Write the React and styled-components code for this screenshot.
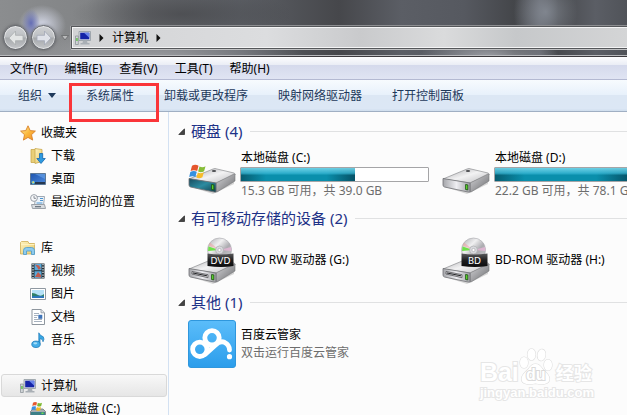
import React, { useState } from 'react';
import styled, { createGlobalStyle } from 'styled-components';


const menuItems = ['文件(F)', '编辑(E)', '查看(V)', '工具(T)', '帮助(H)'];

const navGroups = [
    {
        title: '收藏夹', icon: 'star',
        items: [
            { label: '下载', icon: 'download' },
            { label: '桌面', icon: 'desktop' },
            { label: '最近访问的位置', icon: 'recent' }
        ]
    },
    {
        title: '库', icon: 'library',
        items: [
            { label: '视频', icon: 'video' },
            { label: '图片', icon: 'picture' },
            { label: '文档', icon: 'doc' },
            { label: '音乐', icon: 'music' }
        ]
    },
    {
        title: '计算机', icon: 'computer',
        items: [
            { label: '本地磁盘 (C:)', icon: 'disk' }
        ]
    }
];


const smallIcons = {
    star: (
        <path d="M8 .8l2.2 4.8 5.2.5-3.9 3.6 1.2 5.4L8 12.4l-4.6 2.7 1.1-5.4L.6 6.1l5.2-.5z" fill="url(#gStar)" stroke="#d9812a" strokeWidth=".9" />
    ),
    download: (
        <>
            <path d="M1 1.5h6v13H1z" fill="#e9cf78" stroke="#c9a84c" strokeWidth=".8" />
            <path d="M5 .5l7 1v12l-7 2z" fill="url(#gFolder)" stroke="#c9a84c" strokeWidth=".8" />
            <path d="M9.5 5.5h3.2v5h2.6L11 15.5 6.8 10.5h2.7z" fill="#2e9ae0" stroke="#1668b0" strokeWidth=".8" />
        </>
    ),
    desktop: (
        <>
            <path d="M.5 2.5h15v11H.5z" fill="url(#gScreen)" stroke="#5c7896" />
            <path d="M1 11h14v2H1z" fill="#26384f" />
            <path d="M5 3L15 8V3z" fill="#6ba5ea" opacity=".6" />
            <circle cx="3.2" cy="11.5" r="1.8" fill="#58b7dc" />
            <path d="M2.5 10.5h1.5v1.5H2.5z" fill="#f4d25a" />
        </>
    ),
    recent: (
        <>
            <path d="M5.5 2.5h9l-1 9h-9z" fill="#eef4fa" stroke="#9fa8b2" />
            <path d="M10 4.5h3M10 6.5h3M6.5 9h6" stroke="#4b93cf" strokeWidth="1.2" />
            <path d="M1.5 10.5h13l1 4h-13z" fill="#d8dce0" stroke="#9ba1a8" />
            <path d="M5 12h6v1.3H5z" fill="#6f7984" />
            <circle cx="4" cy="4" r="3.4" fill="#f7f8fa" stroke="#9aa1a9" />
            <path d="M4 2v2.3h2" stroke="#6c747d" fill="none" strokeWidth=".8" />
        </>
    ),
    library: (
        <>
            <path d="M.5 2.5V14h14V3.5H9l-1-2H1.5z" fill="url(#gFolder)" stroke="#cfaf55" strokeWidth=".8" />
            <path d="M1 4.5h13.5" stroke="#fff3c0" />
            <path d="M3.5 14.5v-4q0-3 3-3h5q3 0 3 3v4h-3V11h-5v3.5z" fill="#8dcbee" stroke="#4d9bcc" strokeWidth=".8" />
        </>
    ),
    video: (
        <>
            <path d="M1.5.5h13v15h-13z" fill="#243038" />
            <path d="M4.5 1h7v6.3h-7zM4.5 8.3h7V15h-7z" fill="#5babdb" />
            <path d="M5 1.5l4 1 2 3-2.5 1.3-1-2zM5 14l3-5 3 3v2.5z" fill="#c45b4d" />
            <path d="M3 1v14M13 1v14" stroke="#e2e9ec" strokeWidth="1.3" strokeDasharray="1.3 1.3" />
        </>
    ),
    picture: (
        <>
            <path d="M.5 2.5h15v11H.5z" fill="#fff" stroke="#8f98a1" />
            <path d="M2 4h12v8H2z" fill="#b5e1f7" />
            <path d="M2 7q3 0 6 2t6-1v4H2z" fill="#2f8068" />
            <path d="M2 10.3q6-1.3 12 0V12H2z" fill="#2c76bd" />
        </>
    ),
    doc: (
        <>
            <path d="M2 .5h9l3.5 3.3v11.7H2z" fill="#fff" stroke="#8e969e" />
            <path d="M11 .5v3.3h3.5" fill="#dfe4e9" stroke="#8e969e" strokeWidth=".8" />
            <path d="M4 4.5h5M4 6.5h4M4 8.5h3M4 10.5h8M4 12.5h8" stroke="#9da9b8" strokeWidth=".9" />
            <path d="M8.3 5.8h4v4h-4z" fill="#3f74b8" />
        </>
    ),
    music: (
        <>
            <path d="M8.8 12V.8Q10 3.8 13.3 4.8 14.8 7 13 9.8 13 7 10 6.5V12.5z" fill="#38a7e4" stroke="#1c79b8" strokeWidth=".7" />
            <ellipse cx="6" cy="12.3" rx="4.2" ry="3.2" fill="#45aee8" stroke="#1c79b8" strokeWidth=".8" />
            <ellipse cx="5.3" cy="11.3" rx="2" ry="1.1" fill="#a3dcf8" />
        </>
    ),
    computer: (
        <>
            <path d="M.5 6h2.8v8.5H.5z" fill="#d1d5d8" stroke="#858c92" strokeWidth=".7" />
            <path d="M1.3 8h1.3v3H1.3z" fill="#53bd3a" />
            <path d="M4 1.5h11.5v9H4z" fill="#d9dde1" stroke="#9199a1" strokeWidth=".8" />
            <path d="M5.2 2.7h9.1v6.6H5.2z" fill="#1524a8" />
            <path d="M9 2.7h5.3v5z" fill="#6a84ea" />
            <path d="M8 10.5h4l.5 2.5h2v1.5h-9V13h2z" fill="#a9afb5" />
        </>
    ),
    disk: (
        <>
            <path d="M.5 10.5L3 8h10l2.5 2.5v4H.5z" fill="#a7adb1" stroke="#6e757a" strokeWidth=".8" />
            <path d="M1 11h14v3H1z" fill="#3c8088" />
            <path d="M11.5 11.5h2V13h-2z" fill="#6de04f" />
            <path d="M3 1.7Q5 .5 7 1.5L6.3 4.6Q4.3 3.8 2.3 5z" fill="#e4582f" />
            <path d="M7.8 1.8q2 1 4.2 0l-.8 3.3q-2 1-4.1 0z" fill="#7db832" />
            <path d="M2 5.8q2-1.2 4.1-.2l-.8 3.2q-2-.8-4 .3z" fill="#3a8ee2" />
            <path d="M6.9 6q2 1 4.1 0l-.8 3.3q-2 1-4.1 0z" fill="#f5b920" />
        </>
    )
};


const SmallIcon = ({ name }) => (
    <svg width="16" height="16" viewBox="0 0 16 16" aria-hidden="true">{smallIcons[name]}</svg>
);


const GradientDefs = () => (
    <DefsSvg aria-hidden="true">
        <defs>
            <linearGradient id="gStar" x1="0" y1="0" x2="1" y2="1">
                <stop offset="0" stopColor="#fff3a6" />
                <stop offset=".5" stopColor="#fbb83d" />
                <stop offset="1" stopColor="#ef8a22" />
            </linearGradient>
            <linearGradient id="gFolder" x1="0" y1="0" x2="1" y2="1">
                <stop offset="0" stopColor="#fdf2bd" />
                <stop offset="1" stopColor="#e9ca6c" />
            </linearGradient>
            <linearGradient id="gScreen" x1="0" y1="0" x2="1" y2="1">
                <stop offset="0" stopColor="#1f55ae" />
                <stop offset="1" stopColor="#4c8ade" />
            </linearGradient>
            <linearGradient id="gTop" x1="0" y1="0" x2="1" y2="1">
                <stop offset="0" stopColor="#a9a9ac" />
                <stop offset=".5" stopColor="#f2f2f3" />
                <stop offset="1" stopColor="#bcbcbf" />
            </linearGradient>
            <linearGradient id="gFront" x1="0" y1="0" x2="1" y2="0">
                <stop offset="0" stopColor="#a5a6aa" />
                <stop offset=".5" stopColor="#eeeef2" />
                <stop offset="1" stopColor="#9e9fa3" />
            </linearGradient>
            <linearGradient id="gTeal" x1="0" y1="0" x2="1" y2="1">
                <stop offset="0" stopColor="#184a5c" />
                <stop offset=".5" stopColor="#2c8ba0" />
                <stop offset="1" stopColor="#123f4b" />
            </linearGradient>
            <linearGradient id="gSide" x1="0" y1="0" x2="1" y2="1">
                <stop offset="0" stopColor="#d5d5d8" />
                <stop offset="1" stopColor="#6b6c6f" />
            </linearGradient>
            <linearGradient id="gDisc" x1="0" y1="0" x2="1" y2="1">
                <stop offset="0" stopColor="#a9a9ad" />
                <stop offset=".35" stopColor="#f0f0f1" />
                <stop offset=".6" stopColor="#acacb0" />
                <stop offset="1" stopColor="#d3d3d7" />
            </linearGradient>
            <linearGradient id="gLabel" x1="0" y1="0" x2="0" y2="1">
                <stop offset="0" stopColor="#5a5a5c" />
                <stop offset=".5" stopColor="#1f1f20" />
                <stop offset="1" stopColor="#0c0c0d" />
            </linearGradient>
            <linearGradient id="gCloud" x1="0" y1="0" x2="0" y2="1">
                <stop offset="0" stopColor="#5bbdfa" />
                <stop offset="1" stopColor="#2b9deb" />
            </linearGradient>
        </defs>
    </DefsSvg>
);


const DriveBody = ({ slot, system }) => (
    <>
        <path d="M3 40l22 7 21-10v-3L25 44z" fill="#000" opacity=".15" />
        <path d="M1 32L25 22q2-1 4 0l17 4q2 1 1 2L28 36z" fill="url(#gTop)" stroke="#8d8e91" strokeWidth=".7" />
        <path d="M28 36l18-9q1 0 1 1v6L29 45q-1 .5-1-1z" fill="url(#gSide)" stroke="#77787b" strokeWidth=".6" />
        <path d="M1 31.5l27 4.5v8.5q0 1-1.5.6L2.5 40Q1 39.5 1 38z" fill={system ? 'url(#gTeal)' : 'url(#gFront)'} stroke="#6f7073" strokeWidth=".8" />
        {slot && <path d="M4 34.5l16 3.2v3L4 37z" fill="#d7d7da" stroke="#555659" strokeWidth=".8" />}
        {slot && <path d="M5 36l14 2.8" stroke="#26272a" strokeWidth="1" />}
        <path d="M23.6 37.5l2.2.4v5l-2.2-.4z" fill="#5fdc2c" stroke="#17470f" strokeWidth=".8" />
        {!slot && <ellipse cx="26" cy="24" rx="2.2" ry=".9" fill="#4c4d50" />}
    </>
);

const DriveIcon = ({ kind, label }) => (
    <svg width="48" height="48" viewBox={kind === 'optical' ? '0 -1 48 48' : '0 4 48 48'} aria-hidden="true">
        <DriveBody slot={kind === 'optical'} system={kind === 'system'} />
        {kind === 'system' && (
            <>
                <path d="M4 18.7Q7.5 17 10.5 18.8L9.2 24Q6 22.3 2.6 24z" fill="#e5562d" />
                <path d="M11.5 19.5q3 1.6 6-.2l-1.4 5q-3 1.8-6 .3z" fill="#86bd38" />
                <path d="M2.3 25q3.3-1.7 6.5-.2l-1.4 5.3q-3-1.6-6.2 0z" fill="#3590df" />
                <path d="M9.8 25.5q3 1.6 6-.2l-1.4 5q-3 1.8-6 .3z" fill="#f7bc29" />
            </>
        )}
        {kind === 'optical' && (
            <>
                <circle cx="31.5" cy="13" r="12" fill="url(#gDisc)" stroke="#b0b0b4" strokeWidth=".7" />
                <path d="M31.5 13l-11-3.5-.5 4.5z" fill="#6fe04a" />
                <path d="M31.5 13L22 5.6 20.6 8.8z" fill="#ef9c9c" opacity=".5" />
                <path d="M31.5 13l11.5-3 .5 4z" fill="#eeb7dc" opacity=".7" />
                <circle cx="31.5" cy="13" r="4" fill="#d9dade" stroke="#a6a7aa" strokeWidth=".6" />
                <circle cx="31.5" cy="13" r="1.6" fill="#fcfcfc" stroke="#96979a" strokeWidth=".5" />
                <path d="M19.5 16.5q12 2 26 0V29q-12 1.8-26 0z" fill="url(#gLabel)" />
                <text x="32.5" y="26.5" fontSize="9" fill="#fff" textAnchor="middle" fontFamily="DejaVu Sans, sans-serif">{label}</text>
            </>
        )}
    </svg>
);

const CloudIcon = () => (
    <svg width="48" height="48" viewBox="0 0 48 48" aria-hidden="true">
        <rect x=".5" y=".5" width="47" height="47" rx="2.5" fill="url(#gCloud)" stroke="#2f97dd" />
        <g fill="none" stroke="#fff" strokeWidth="4.8" strokeLinecap="round">
            <circle cx="11.8" cy="29.3" r="7.2" />
            <circle cx="24" cy="17.8" r="7.2" />
            <path d="M17.3 34.3L27.5 25Q32 20.5 36.5 22.3 41.5 24.8 41.5 30" />
        </g>
        <circle cx="41.5" cy="36.7" r="2.6" fill="#fff" />
    </svg>
);


const Drive = ({ name, kind, used, note }) => (
    <Tile>
        <DriveIcon kind={kind} />
        <TileText>
            <TileName>{name}</TileName>
            <Track role="progressbar" aria-label={name} aria-valuenow={used}>
                <Fill style={{ width: `${used}%` }} />
            </Track>
            <TileNote>{note}</TileNote>
        </TileText>
    </Tile>
);

const Group = ({ title, children }) => (
    <section>
        <GroupHead>
            <svg width="7" height="7" viewBox="0 0 7 7" aria-hidden="true"><path d="M6.5.8v5.7H.8z" fill="#444" stroke="#222" strokeWidth=".7" /></svg>
            <h2>{title}</h2>
            <hr />
        </GroupHead>
        <Tiles>{children}</Tiles>
    </section>
);

const Chevron = () => (
    <svg width="5" height="8" viewBox="0 0 5 8" aria-hidden="true"><path d="M.5 0L4.5 4l-4 4z" fill="#111" /></svg>
);


const App = () => {

    const [selected, setSelected] = useState('计算机');

    return (
        <Page>
            <GlobalStyle />
            <GradientDefs />
            <TitleBar>
                <RoundButton aria-label="后退">
                    <svg width="18" height="18" viewBox="0 0 18 18"><path d="M8.5 2L2 9l6.5 7v-4.3H16V6.3H8.5z" fill="#e3e5e5" stroke="#a9adaf" strokeWidth=".8" /></svg>
                </RoundButton>
                <RoundButton aria-label="前进">
                    <svg width="18" height="18" viewBox="0 0 18 18"><path d="M9.5 2L16 9l-6.5 7v-4.3H2V6.3h7.5z" fill="#dfe2e9" stroke="#a3a8b6" strokeWidth=".8" /></svg>
                </RoundButton>
                <HistoryButton aria-label="历史记录">
                    <svg width="8" height="6" viewBox="0 0 8 6"><path d="M.5.5h7L4 5z" fill="#b9babb" stroke="#66686a" strokeWidth=".8" /></svg>
                </HistoryButton>
                <AddressBar>
                    <SmallIcon name="computer" />
                    <Chevron />
                    <button>计算机</button>
                    <Chevron />
                </AddressBar>
            </TitleBar>

            <MenuBar>
                {menuItems.map(item => <button key={item}>{item}</button>)}
            </MenuBar>

            <Toolbar>
                <button>
                    组织
                    <svg width="8" height="5" viewBox="0 0 8 5" aria-hidden="true"><path d="M0 0h8L4 5z" fill="#1e395b" /></svg>
                </button>
                <Marked>系统属性</Marked>
                <button>卸载或更改程序</button>
                <button>映射网络驱动器</button>
                <button>打开控制面板</button>
            </Toolbar>

            <Body>
                <NavPane>
                    {navGroups.map(group => (
                        <NavGroup key={group.title}>
                            <NavRow $active={selected === group.title} onClick={() => setSelected(group.title)}>
                                <SmallIcon name={group.icon} />
                                {group.title}
                            </NavRow>
                            {group.items.map(item => (
                                <NavRow key={item.label} $nested $active={selected === item.label} onClick={() => setSelected(item.label)}>
                                    <SmallIcon name={item.icon} />
                                    {item.label}
                                </NavRow>
                            ))}
                        </NavGroup>
                    ))}
                </NavPane>

                <Content>
                    <Group title="硬盘 (4)">
                        <Drive name="本地磁盘 (C:)" kind="system" used={61} note="15.3 GB 可用，共 39.0 GB" />
                        <Drive name="本地磁盘 (D:)" kind="disk" used={72} note="22.2 GB 可用，共 78.1 GB" />
                    </Group>
                    <Group title="有可移动存储的设备 (2)">
                        <Tile>
                            <DriveIcon kind="optical" label="DVD" />
                            <TileText><TileName>DVD RW 驱动器 (G:)</TileName></TileText>
                        </Tile>
                        <Tile>
                            <DriveIcon kind="optical" label="BD" />
                            <TileText><TileName>BD-ROM 驱动器 (H:)</TileName></TileText>
                        </Tile>
                    </Group>
                    <Group title="其他 (1)">
                        <Tile>
                            <CloudIcon />
                            <TileText>
                                <TileName>百度云管家</TileName>
                                <TileNote>双击运行百度云管家</TileNote>
                            </TileText>
                        </Tile>
                    </Group>
                </Content>
            </Body>

            <Watermark>
                <Brand>
                    <span>Bai</span>
                    <Paw>
                        <svg width="34" height="37" viewBox="0 0 34 37" aria-hidden="true">
                            <g fill="#fff" stroke="#dedede" strokeWidth="1.2">
                                <ellipse cx="5" cy="14.5" rx="4" ry="5.5" />
                                <ellipse cx="12.5" cy="6.5" rx="4" ry="5.7" />
                                <ellipse cx="22.5" cy="7" rx="4" ry="5.7" transform="rotate(10 22.5 7)" />
                                <ellipse cx="29" cy="17" rx="4" ry="5.5" />
                                <path d="M16.5 16q4 0 7 5 7 6 7 10t-5 5q-4 .5-9-.5-5 1-9 .5-5-1-5-5t7-10q3-5 7-5z" />
                            </g>
                        </svg>
                        <b>du</b>
                    </Paw>
                    <span>经验</span>
                </Brand>
                <Site>jingyan.baidu.com</Site>
            </Watermark>
        </Page>
    );
};

export default App;



const GlobalStyle = createGlobalStyle`
    * {
        box-sizing: border-box;
    }

    body {
        margin: 0;
        background: #fcfcfc;
        color: #000;
        font: 12px/18px "Noto Sans", "Noto Sans CJK SC", sans-serif;
    }

    button {
        padding: 0;
        border: 0;
        background: none;
        color: inherit;
        font: inherit;
        white-space: nowrap;
    }

    svg {
        display: block;
        flex: none;
    }
`;

const DefsSvg = styled.svg`
    position: absolute;
    width: 0;
    height: 0;
`;

const Page = styled.div`
    position: relative;
    display: flex;
    flex-direction: column;
    height: 100vh;
    overflow: hidden;
`;

const TitleBar = styled.header`
    display: flex;
    flex: none;
    align-items: center;
    height: 57px;
    padding: 19px 0 0 3px;
    border-bottom: 1px solid #3c3a3e;
    box-shadow: inset 0 -1px 0 #b9babd;
    background:
        radial-gradient(9px 14px at 31px 23px, rgba(92, 102, 180, .9) 0, rgba(110, 120, 185, 0) 100%),
        radial-gradient(24px 20px at 42px 25px, rgba(222, 226, 242, .9) 0, rgba(200, 205, 220, 0) 100%),
        radial-gradient(32px 36px at 87% 12px, rgba(138, 144, 154, .8) 0, transparent 100%),
        radial-gradient(70px 22px at 78% 57px, rgba(176, 178, 184, .8) 0, transparent 100%),
        radial-gradient(150px 34px at 25% 60px, rgba(172, 173, 177, .8) 0, transparent 100%),
        radial-gradient(110px 26px at 29% 14px, rgba(58, 59, 62, .5) 0, transparent 100%),
        linear-gradient(90deg, #8b8d8f 0, #828486 14%, #66686c 24%, #5d6066 38%, #46474b 54%, #5b5e65 64%, #565960 74%, #44464a 82%, #5f6269 86%, #484a4e 89%, #5b5e65 95%, #505359 100%);
`;

const RoundButton = styled.button`
    &&& {
        display: flex;
        align-items: center;
        justify-content: center;
        width: 25px;
        height: 25px;
        margin-right: 3px;
        border: 1px solid #63666b;
        border-radius: 50%;
        background: linear-gradient(#cfd1d4 0, #bcbfc2 48%, #a5a8ab 52%, #c4c6c9 100%);
        box-shadow: inset 0 0 0 1px rgba(255, 255, 255, .5), 0 0 3px rgba(60, 60, 65, .6);
    }
`;

const HistoryButton = styled.button`
    &&& {
        display: flex;
        justify-content: center;
        width: 12px;
    }
`;

const AddressBar = styled.div`
    display: flex;
    flex: 1;
    align-items: center;
    gap: 8px;
    height: 23px;
    padding-left: 3px;
    border: 1px solid #55575a;
    border-right: 0;
    background: linear-gradient(90deg, #d2d3d5 0, #dcdddf 35%, #c9cacc 52%, #dadbdc 67%, #c6c8ca 80%, #d4d5d6 100%);
    box-shadow: inset 1px 1px 0 #f4f4f5, inset 0 -1px 0 #f4f4f5, -1px 0 0 #a2a3a5, 0 -1px 0 #8e8f92, 0 1px 0 #c0c1c3;
`;

const MenuBar = styled.nav`
    display: flex;
    flex: none;
    gap: 17px;
    align-items: center;
    height: 23px;
    padding: 2px 0 0 10px;
    border-bottom: 1px solid #b4b9d2;
    background: linear-gradient(#fdfdfe 0, #eaedf5 36%, #d5daec 38%, #e0e4f3 100%);
`;

const Toolbar = styled.div`
    display: flex;
    flex: none;
    gap: 30px;
    align-items: center;
    height: 32px;
    padding-left: 18px;
    border-bottom: 1px solid #a0afc3;
    background: linear-gradient(#f7fbfe 0, #e8f1fb 47%, #dce7f4 50%, #dce7f5 92%, #cfdeed 100%);
    color: #1e395b;

    button {
        display: flex;
        align-items: center;
        gap: 6px;
    }
`;

const Marked = styled.button`
    position: relative;

    &::after {
        content: '';
        position: absolute;
        inset: -4px -25px -17px -17px;
        border: 3px solid #fa3539;
        z-index: 2;
    }
`;

const Body = styled.div`
    display: flex;
    flex: 1;
    min-height: 0;
`;

const NavPane = styled.nav`
    display: flex;
    flex: none;
    flex-direction: column;
    gap: 23px;
    width: 169px;
    padding: 9px 1px 0;
    border-right: 1px solid #d3e1f2;
`;

const NavGroup = styled.div`
    display: flex;
    flex-direction: column;
`;

const NavRow = styled.button`
    &&& {
        display: flex;
        align-items: center;
        gap: 5px;
        height: 23px;
        padding-left: ${props => props.$nested ? '28px' : '18px'};
        border: 1px solid ${props => props.$active ? '#d9d9d9' : 'transparent'};
        border-radius: 3px;
        background: ${props => props.$active ? 'linear-gradient(#f8f8f8, #e6e6e6)' : 'none'};
        text-align: left;
    }
`;

const Content = styled.main`
    flex: 1;
    min-width: 0;
    padding: 8px 0 0 9px;
    overflow: hidden;
`;

const GroupHead = styled.div`
    display: flex;
    align-items: center;
    height: 22px;

    h2 {
        margin: 0 8px 0 6px;
        color: #1e3287;
        font-size: 15px;
        font-weight: 400;
        line-height: 22px;
        white-space: nowrap;
    }

    hr {
        flex: 1;
        margin: 0;
        border: 0;
        border-top: 1px solid #e0e1e2;
    }
`;

const Tiles = styled.div`
    display: flex;
    padding: 7px 0 7px 10px;
`;

const Tile = styled.div`
    display: flex;
    flex: none;
    gap: 4px;
    align-items: center;
    width: 254px;
`;

const TileText = styled.div`
    display: flex;
    flex-direction: column;
    width: 189px;
`;

const TileName = styled.div`
    padding-left: 1px;
    white-space: nowrap;
`;

const TileNote = styled.div`
    padding-left: 1px;
    color: #6d6d6d;
    white-space: nowrap;
`;

const Track = styled.div`
    height: 15px;
    border: 1px solid #a5a5a7;
    border-radius: 1px;
    background: #fff;
`;

const Fill = styled.div`
    height: 100%;
    background:
        linear-gradient(rgba(120, 215, 235, .9) 0, rgba(60, 185, 215, .75) 40%, rgba(60, 185, 215, 0) 56%),
        linear-gradient(90deg, #065c70 0, #0a8fac 22%, #0a8fac 75%, #065166 100%);
`;

const Watermark = styled.div`
    position: absolute;
    right: 33px;
    bottom: 14px;
    color: #fff;
    font-family: "Liberation Sans", "Noto Sans CJK SC", sans-serif;
    font-weight: 700;
    paint-order: stroke fill;
    -webkit-text-stroke: 2px #e6e6e6;
`;

const Brand = styled.div`
    display: flex;
    align-items: flex-end;

    span {
        font-size: 25px;
        line-height: 26px;
    }

    span:last-child {
        margin-left: 3px;
        font-size: 18px;
        line-height: 22px;
    }
`;

const Paw = styled.div`
    display: grid;

    > * {
        grid-area: 1 / 1;
    }

    b {
        align-self: end;
        justify-self: center;
        font-size: 16px;
        line-height: 20px;
        -webkit-text-stroke: 2px #dadada;
    }
`;

const Site = styled.div`
    font-size: 13px;
    line-height: 16px;
`;
